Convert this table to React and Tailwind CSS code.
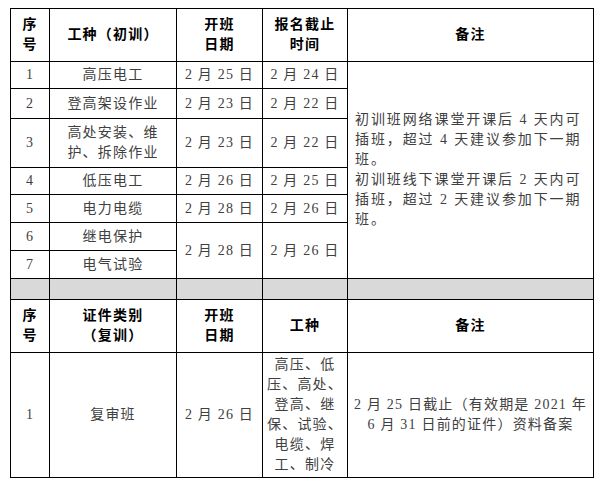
const font = { fontFamily: '"Liberation Serif", "Noto Sans CJK SC", serif' }

const td = "border border-black p-0 text-center align-middle"
const th = "border border-black p-0 text-center align-middle font-bold text-black"

const rows = [
  { no: "1", name: ["高压电工"], start: "2 月 25 日", end: "2 月 24 日", h: "h-[27px]" },
  { no: "2", name: ["登高架设作业"], start: "2 月 23 日", end: "2 月 22 日", h: "h-[30px]" },
  { no: "3", name: ["高处安装、维", "护、拆除作业"], start: "2 月 23 日", end: "2 月 22 日", h: "h-[49px]" },
  { no: "4", name: ["低压电工"], start: "2 月 26 日", end: "2 月 25 日", h: "h-[27px]" },
  { no: "5", name: ["电力电缆"], start: "2 月 28 日", end: "2 月 26 日", h: "h-[28px]" },
]

const remark = [
  "初训班网络课堂开课后 4 天内可",
  "插班，超过 4 天建议参加下一期",
  "班。",
  "初训班线下课堂开课后 2 天内可",
  "插班，超过 2 天建议参加下一期",
  "班。",
]

const types = ["高压、低", "压、高处、", "登高、继", "保、试验、", "电缆、焊", "工、制冷"]

function Lines({ items }) {
  return items.map((t, i) => (
    <div key={i}>{t}</div>
  ))
}

export default function App() {
  return (
    <div className="w-[604px] h-[489px] bg-white pt-[8px] pl-[10px]" style={font}>
      <table className="table-fixed border-collapse w-[583px] text-[14px] leading-[20px] tracking-[1.2px] text-[#404040]">
        <colgroup>
          <col className="w-[39px]" />
          <col className="w-[127px]" />
          <col className="w-[86px]" />
          <col className="w-[85px]" />
          <col className="w-[246px]" />
        </colgroup>
        <tbody>
          <tr className="h-[53px]">
            <td className={th}><div>序</div><div>号</div></td>
            <td className={th}>工种（初训）</td>
            <td className={th}><div>开班</div><div>日期</div></td>
            <td className={th}><div>报名截止</div><div>时间</div></td>
            <td className={th}>备注</td>
          </tr>
          {rows.map((r, i) => (
            <tr key={r.no} className={r.h}>
              <td className={td}>{r.no}</td>
              <td className={td}><Lines items={r.name} /></td>
              <td className={td}>{r.start}</td>
              <td className={td}>{r.end}</td>
              {i === 0 && (
                <td rowSpan={7} className="border border-black py-0 pl-[7px] pr-1 text-left align-middle tracking-[1.9px]">
                  <Lines items={remark} />
                </td>
              )}
            </tr>
          ))}
          <tr className="h-[28px]">
            <td className={td}>6</td>
            <td className={td}>继电保护</td>
            <td rowSpan={2} className={td}>2 月 28 日</td>
            <td rowSpan={2} className={td}>2 月 26 日</td>
          </tr>
          <tr className="h-[28px]">
            <td className={td}>7</td>
            <td className={td}>电气试验</td>
          </tr>
          <tr className="h-[21px] bg-[#d9d9d9]">
            <td className="border border-black p-0" />
            <td className="border border-black p-0" />
            <td className="border border-black p-0" />
            <td className="border border-black p-0" />
            <td className="border border-black p-0" />
          </tr>
          <tr className="h-[53px]">
            <td className={th}><div>序</div><div>号</div></td>
            <td className={th}><div>证件类别</div><div>（复训）</div></td>
            <td className={th}><div>开班</div><div>日期</div></td>
            <td className={th}>工种</td>
            <td className={th}>备注</td>
          </tr>
          <tr className="h-[125px]">
            <td className={td}>1</td>
            <td className={td}>复审班</td>
            <td className={td}>2 月 26 日</td>
            <td className={td}><Lines items={types} /></td>
            <td className="border border-black px-1 py-0 text-center align-middle">
              <div>2 月 25 日截止（有效期是 2021 年</div>
              <div>6 月 31 日前的证件）资料备案</div>
            </td>
          </tr>
        </tbody>
      </table>
    </div>
  )
}
